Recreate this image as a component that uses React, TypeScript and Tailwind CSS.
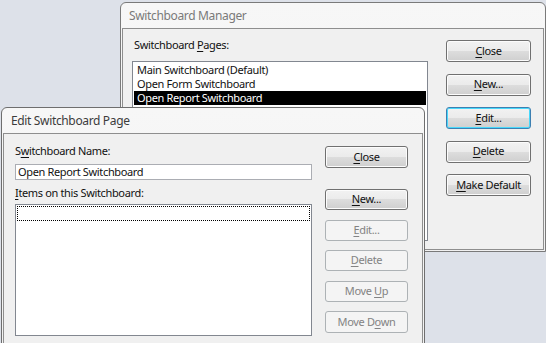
import React from 'react';

const font = { fontFamily: '"Noto Sans", "Open Sans", sans-serif' };

type BtnProps = {
  pre?: string;
  u: string;
  post?: string;
  w: string;
  h: string;
  disabled?: boolean;
  focused?: boolean;
};

function Button({ pre = '', u, post = '', w, h, disabled, focused }: BtnProps) {
  if (disabled) {
    return (
      <div className={`${w} ${h} flex items-center justify-center rounded-[3px] border border-[#adb2b5] bg-[#f4f4f4] text-[#838383]`}>
        <span>{pre}<u className="underline-offset-2">{u}</u>{post}</span>
      </div>
    );
  }
  return (
    <div
      className={`${w} ${h} flex items-center justify-center rounded-[3px] border text-[#111] bg-[linear-gradient(#f2f2f2_0%,#ebebeb_50%,#dddddd_50%,#cfcfcf_100%)] ${
        focused
          ? 'border-[#3c7fb1] shadow-[inset_0_0_0_1px_#48d8fb]'
          : 'border-[#707070] shadow-[inset_0_0_0_1px_#fcfcfc]'
      }`}
    >
      <span>{pre}<u className="underline-offset-2">{u}</u>{post}</span>
    </div>
  );
}

function SwitchboardManager() {
  return (
    <div className="absolute left-[120px] top-[2px] flex h-[250px] w-[426px] flex-col rounded-t-[6px] border border-[#7a7a7a] bg-[linear-gradient(#f7f7f7,#f1f1f1)] px-[1px] pb-[1px]">
      <div className="flex h-[25px] items-center pl-[7px] text-[12px] tracking-[-0.35px] text-[#7a7a7a]">Switchboard Manager</div>
      <div className="flex flex-1 border border-[#8e8e8e] bg-[#f0f0f0]">
        <div className="flex flex-col pl-[9px] pt-[8px]">
          <div className="h-[15px] leading-[15px] pl-[2px]">
            Switchboard <u className="underline-offset-2">P</u>ages:
          </div>
          <div className="mt-[9px] flex h-[180px] w-[296px] flex-col border border-[#828790] bg-white p-[1px]">
            <div className="h-[14px] pl-[3px] leading-[14px]">Main Switchboard (Default)</div>
            <div className="h-[14px] pl-[3px] leading-[14px]">Open Form Switchboard</div>
            <div className="h-[14px] bg-black pl-[3px] leading-[14px] text-white">Open Report Switchboard</div>
          </div>
        </div>
        <div className="ml-[18px] flex flex-col gap-[11.5px] pt-[11px]">
          <Button u="C" post="lose" w="w-[85px]" h="h-[22px]" />
          <Button u="N" post="ew..." w="w-[85px]" h="h-[22px]" />
          <Button u="E" post="dit..." w="w-[85px]" h="h-[22px]" focused />
          <Button u="D" post="elete" w="w-[85px]" h="h-[22px]" />
          <Button u="M" post="ake Default" w="w-[85px]" h="h-[22px]" />
        </div>
      </div>
    </div>
  );
}

function EditSwitchboardPage() {
  return (
    <div className="absolute left-[1px] top-[107px] flex h-[260px] w-[424px] flex-col rounded-t-[6px] border border-[#6e6e6e] bg-[linear-gradient(#f7f7f7,#f1f1f1)] px-[1px] pb-[1px]">
      <div className="flex h-[25px] items-center pl-[8px] text-[12px] tracking-[-0.35px] text-[#3c3c3c]">Edit Switchboard Page</div>
      <div className="flex flex-1 border border-[#8e8e8e] bg-[#f0f0f0]">
        <div className="flex flex-col pl-[11px] pt-[9px]">
          <div className="h-[15px] leading-[15px]">
            S<u className="underline-offset-2">w</u>itchboard Name:
          </div>
          <div className="mt-[6px] flex h-[16px] w-[297px] items-center border border-[#abadb3] bg-white pl-[2px] leading-[14px]">
            Open Report Switchboard
          </div>
          <div className="mt-[5px] h-[15px] leading-[15px]">
            <u className="underline-offset-2">I</u>tems on this Switchboard:
          </div>
          <div className="mt-[4px] h-[132px] w-[297px] border border-[#828790] bg-white p-[1px]">
            <div className="h-[15px] border border-dotted border-black" />
          </div>
        </div>
        <div className="ml-[13px] flex flex-col pt-[12px]">
          <Button u="C" post="lose" w="w-[83px]" h="h-[22px]" />
          <div className="mt-[21px] flex flex-col gap-[9.5px]">
            <Button u="N" post="ew..." w="w-[83px]" h="h-[21px]" />
            <Button u="E" post="dit..." w="w-[83px]" h="h-[21px]" disabled />
            <Button u="D" post="elete" w="w-[83px]" h="h-[21px]" disabled />
            <Button pre="Move " u="U" post="p" w="w-[83px]" h="h-[21px]" disabled />
            <Button pre="Move D" u="o" post="wn" w="w-[83px]" h="h-[22px]" disabled />
          </div>
        </div>
      </div>
    </div>
  );
}

export default function App() {
  return (
    <div className="relative h-[343px] w-[546px] overflow-hidden bg-[#dde1e9] text-[11px] tracking-[-0.35px] text-[#111]" style={font}>
      <SwitchboardManager />
      <EditSwitchboardPage />
    </div>
  );
}
